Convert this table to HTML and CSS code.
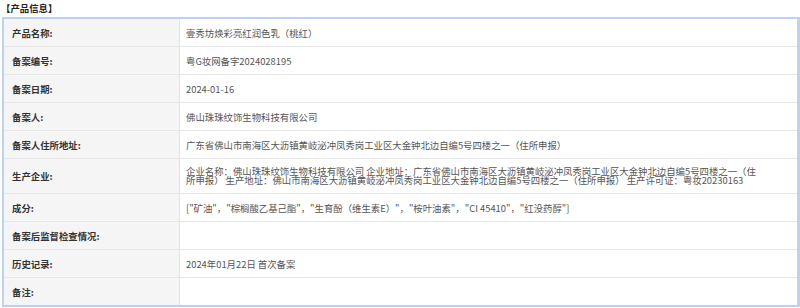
FILE: index.html
```html
<!DOCTYPE html>
<html lang="zh-CN">
<head>
<meta charset="utf-8">
<title>产品信息</title>
<link rel="stylesheet" href="styles.css">
</head>
<body>
<div class="title">【产品信息】</div>
<table class="info">
  <tr><th>产品名称:</th><td>壹秀坊焕彩亮红润色乳（桃红）</td></tr>
  <tr><th>备案编号:</th><td>粤G妆网备字2024028195</td></tr>
  <tr><th>备案日期:</th><td>2024-01-16</td></tr>
  <tr><th>备案人:</th><td>佛山珠珠纹饰生物科技有限公司</td></tr>
  <tr><th>备案人住所地址:</th><td>广东省佛山市南海区大沥镇黄岐泌冲凤秀岗工业区大金钟北边自编5号四楼之一（住所申报）</td></tr>
  <tr class="tall"><th>生产企业:</th><td class="multi">企业名称：佛山珠珠纹饰生物科技有限公司 企业地址：广东省佛山市南海区大沥镇黄岐泌冲凤秀岗工业区大金钟北边自编5号四楼之一（住所申报） 生产地址：佛山市南海区大沥镇黄岐泌冲凤秀岗工业区大金钟北边自编5号四楼之一（住所申报） 生产许可证：粤妆20230163</td></tr>
  <tr><th>成分:</th><td>["矿油"，"棕榈酸乙基己酯"，"生育酚（维生素E）"，"桉叶油素"，"CI 45410"，"红没药醇"]</td></tr>
  <tr><th>备案后监督检查情况:</th><td></td></tr>
  <tr><th>历史记录:</th><td>2024年01月22日 首次备案</td></tr>
  <tr class="last"><th>备注:</th><td></td></tr>
</table>
</body>
</html>
```

FILE: styles.css
```css
html, body {
  margin: 0;
  padding: 0;
  background: #ffffff;
}
body {
  font-family: "Noto Sans CJK SC", "Microsoft YaHei", sans-serif;
  font-size: 9.4px;
  color: #555;
}
.title {
  font-weight: bold;
  color: #222;
  height: 17px;
  line-height: 17px;
  padding-left: 1px;
}
.info {
  margin-left: 2px;
  width: 798px;
  border-collapse: separate;
  border-spacing: 0;
  border-top: 2px solid #bcd2f2;
  border-left: 2px solid #bcd2f2;
  border-right: 3px solid #bcd2f2;
  border-bottom: 2px solid #bcd2f2;
  table-layout: fixed;
}
.info th, .info td {
  height: 27px;
  padding: 0;
  border-bottom: 1px solid #e6e6e6;
  vertical-align: middle;
  line-height: 12px;
  text-align: left;
}
.info th {
  width: 167px;
  padding-left: 8px;
  background: #f5f5f5;
  border-right: 1px solid #e4e4e4;
  color: #333;
  font-weight: bold;
}
.info td {
  padding-left: 6px;
  padding-right: 8px;
  color: #555;
}
.info tr.tall th, .info tr.tall td {
  height: 34px;
}
.info td.multi {
  line-height: 9px;
  padding-right: 36px;
}
.info tr.last th, .info tr.last td {
  border-bottom: none;
}
```
